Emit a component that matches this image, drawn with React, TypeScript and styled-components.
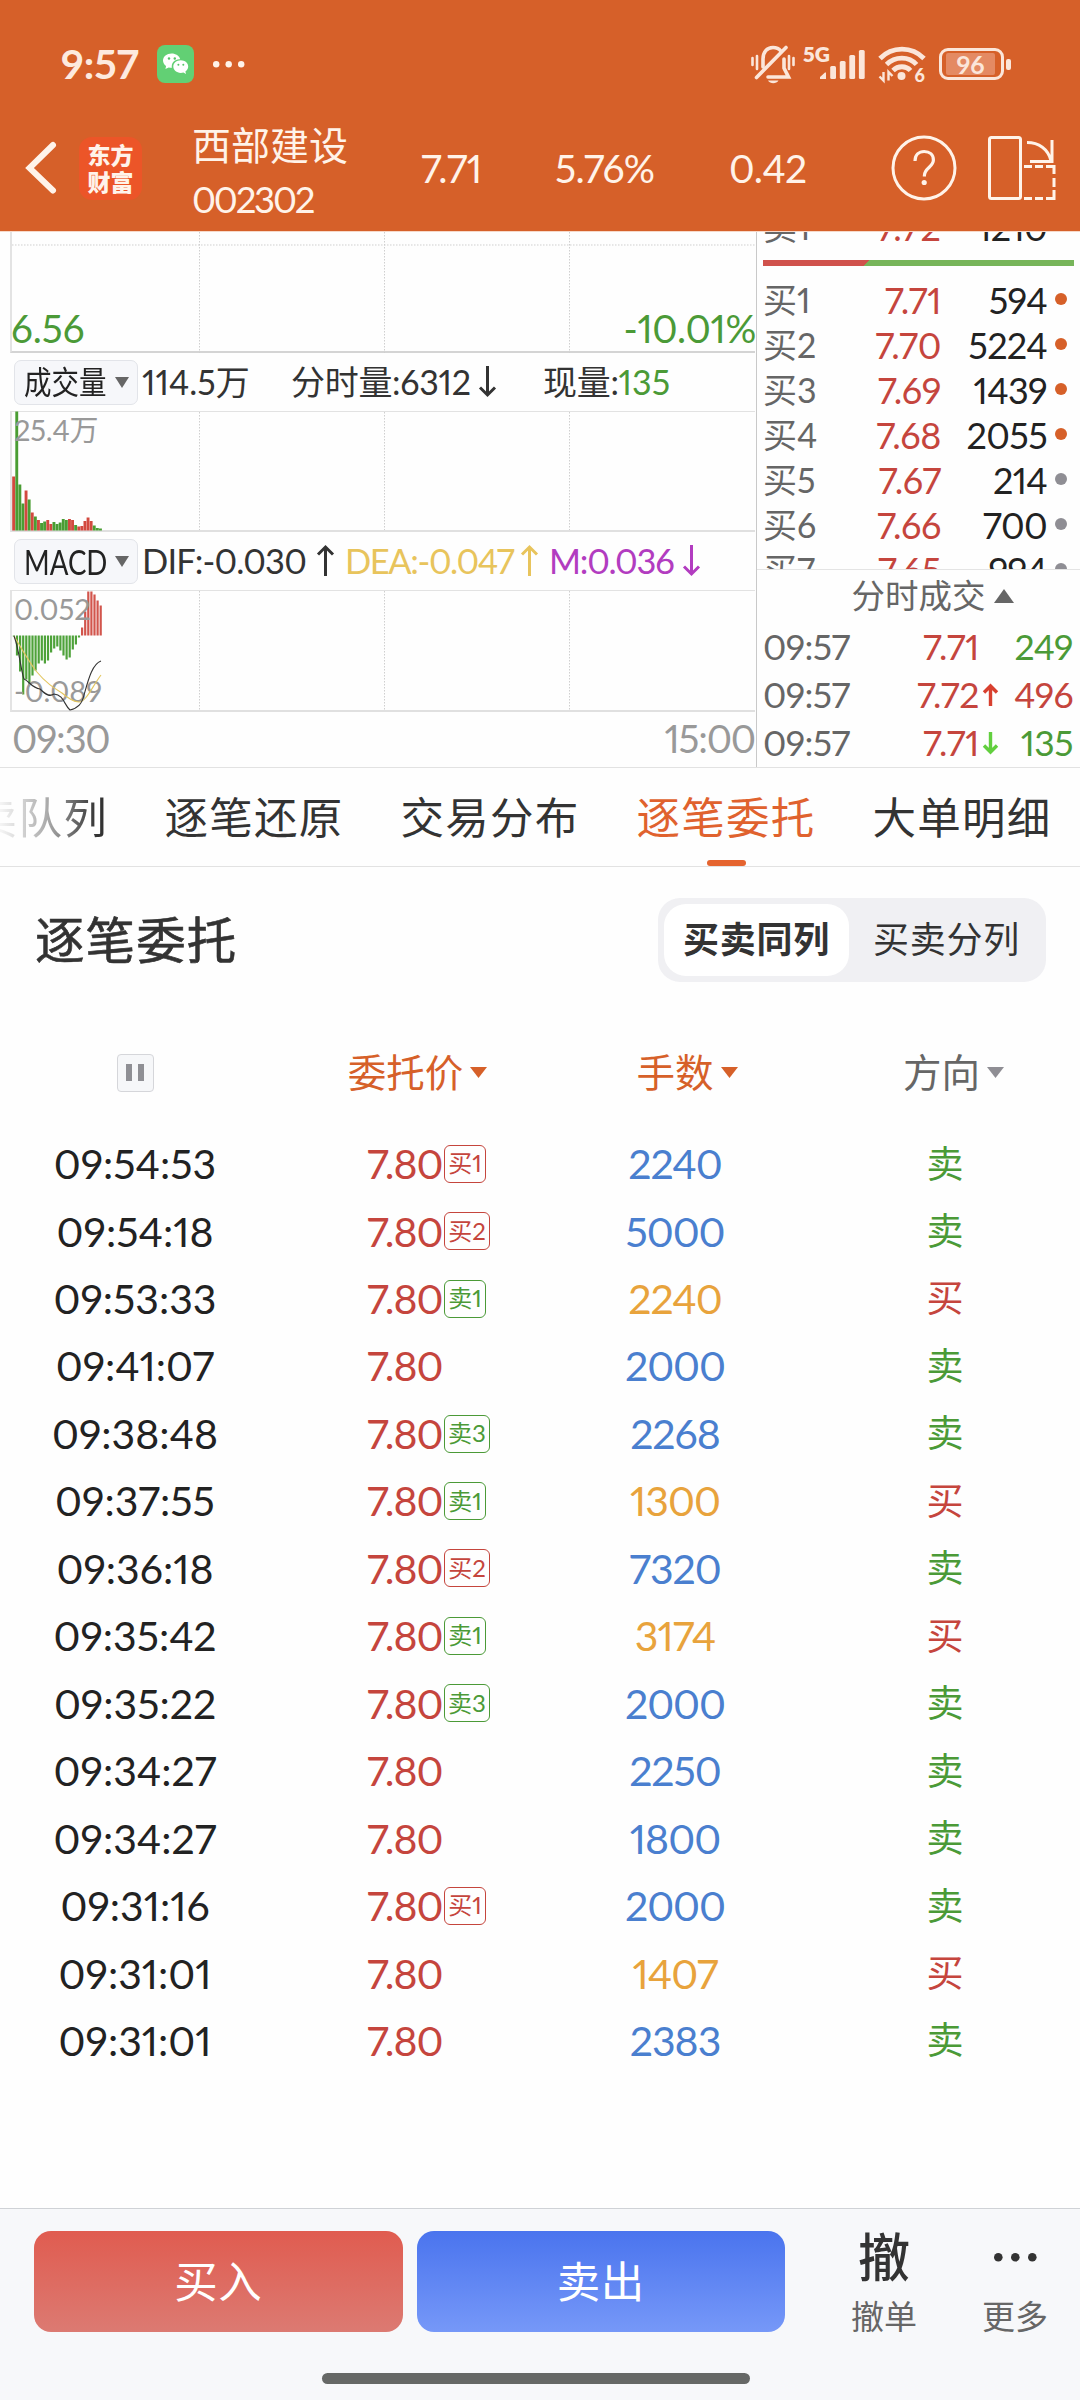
import React from "react";
import styled, { createGlobalStyle } from "styled-components";

const RED = "#c5453d";
const GREEN = "#4b9a37";
const ORANGE = "#d66029";
const BLUE = "#4a7fcf";
const AMBER = "#e8a33c";
const CREAM = "#fff3e9";

const Global = createGlobalStyle`
  * { box-sizing: border-box; }
  body {
    margin: 0; background: #fff; color: #333;
    font-family: Lato, "Noto Sans CJK SC", sans-serif;
    font-variant-numeric: proportional-nums; font-kerning: normal;
  }
  svg { display: block; flex: none; overflow: visible; }
`;

const Screen = styled.div`
  width: 1080px; height: 2400px; overflow: hidden;
  display: flex; flex-direction: column; background: #fefefe;
`;

const Text = styled.span<{ $s: number; $c?: string; $ls?: number; $w?: number; $sx?: number }>`
  display: inline-block; white-space: pre; line-height: 1.2;
  font-size: ${p => p.$s}px; color: ${p => p.$c || "inherit"};
  letter-spacing: ${p => p.$ls || 0}px; font-weight: ${p => p.$w || 400};
  ${p => p.$sx ? `transform: scaleX(${p.$sx}); transform-origin: left;` : ""}
`;

/* top area */
const Top = styled.header`height: 231px; background: ${ORANGE}; color: ${CREAM}; flex: none;`;
const StatusBar = styled.div`
  height: 128px; padding: 0 69px 0 61px; display: flex; align-items: center; justify-content: space-between;
`;
const StatusSide = styled.div<{ $gap: number }>`display: flex; align-items: center; gap: ${p => p.$gap}px;`;
const NavBar = styled.div`
  height: 103px; padding: 0 24px 23px 25px; display: flex; align-items: center;
`;
const Logo = styled.div`
  width: 63px; height: 63px; margin-left: 23px; border-radius: 13px; background: #ec5528; color: #fff3ea;
  display: grid; place-content: center; text-align: center;
  font: 900 23px/27px "Noto Sans CJK SC", sans-serif;
`;
const Stock = styled.div`margin: 8px 0 0 50px; width: 229px; display: flex; flex-direction: column; gap: 9px;`;
const Quote = styled.div<{ $w: number }>`width: ${p => p.$w}px; line-height: 0;`;

/* market area */
const Market = styled.section`height: 537px; display: flex; flex: none; border-bottom: 1px solid #e2e2e2; border-top: 1px solid #f7d9c9;`;
const ChartColumn = styled.div`width: 757px; border-right: 1px solid #c9c9c9; flex: none;`;
const Plot = styled.div<{ $h: number; $top?: boolean; $dark?: boolean }>`
  position: relative; height: ${p => p.$h}px; margin: 0 1px 0 10px; border-left: 2px solid #e3e3e3;
  border-bottom: 2px solid ${p => p.$dark ? "#d4d4d4" : "#e0e0e0"};
  border-top: ${p => p.$top ? "1px solid #e2e2e2" : "0"};
`;
const PlotSvg = styled.svg`display: block; width: 744px; height: 100%;`;
const Over = styled.div<{ $x?: number; $r?: number; $y: number }>`
  position: absolute; top: ${p => p.$y}px; line-height: 0;
  ${p => p.$r !== undefined ? `right: ${p.$r}px` : `left: ${p.$x}px`};
`;
const Indicator = styled.div`
  height: 58px; display: flex; align-items: center; padding-left: 14px; color: #333;
`;
const Picker = styled.div`
  width: 124px; height: 45px; border-radius: 7px; background: #f6f7fa; border: 1px solid #e2e4e9; color: #222;
  display: flex; align-items: center; justify-content: space-between; padding: 0 8px 0 9px; margin-right: 4px; flex: none;
`;
const PickerName = styled.div`width: 84px; flex: none; line-height: 0;`;
const Slot = styled.div<{ $w: number; $gap?: number }>`
  width: ${p => p.$w}px; flex: none; display: flex; align-items: center; gap: ${p => p.$gap || 0}px;
  line-height: 0; white-space: nowrap;
`;
const Axis = styled.div`height: 53px; display: flex; justify-content: space-between; align-items: center; padding: 0 1px 0 12px;`;

const Side = styled.div`flex: 1; min-width: 0; display: flex; flex-direction: column;`;
const Book = styled.div`height: 338px; overflow: hidden; border-bottom: 1px solid #e4e4e4;`;
const BookRow = styled.div`
  height: 45px; display: grid; grid-template-columns: 86px 92px 106px 24px; align-items: center; padding-left: 6px;
  color: #222; line-height: 0;
`;
const FirstRow = styled(BookRow)`margin-top: -27px;`;
const Right = styled.div`display: flex; justify-content: flex-end; line-height: 0;`;
const Dot = styled.i<{ $c: string }>`width: 12px; height: 12px; border-radius: 50%; background: ${p => p.$c}; margin: -3px 0 0 8px;`;
const Ratio = styled.div`
  height: 6px; margin: 10px 6px 12px 6px;
  background: linear-gradient(135deg, #d0524c 0 75px, #77b55a 75px);
`;
const TradesHead = styled.div`height: 53px; display: flex; align-items: center; justify-content: center; gap: 8px; padding: 0 0 2px 28px;`;
const TradeRow = styled.div`
  height: 48px; display: grid; grid-template-columns: 132px 84px 19px 75px; padding-left: 6px; align-items: center; line-height: 0;
`;

/* tabs */
const Tabs = styled.nav`height: 99px; border-bottom: 1px solid #e2e2e2; display: flex; padding-left: 0; overflow: hidden; flex: none;`;
const Tab = styled.div<{ $on?: boolean }>`
  width: 236px; flex: none; display: flex; flex-direction: column; align-items: center; justify-content: flex-end;
  color: ${p => p.$on ? "#e0622e" : "#333"};
`;
const CutTab = styled(Tab)`
  width: 136px; align-items: flex-end; padding-right: 28px;
`;
const Faded = styled(Text)`
  background: linear-gradient(90deg, #f4f4f4 72px, #ababab 118px, #333 168px); background-clip: text; -webkit-background-clip: text;
  color: transparent;
`;
const Underline = styled.i<{ $on?: boolean }>`
  width: 39px; height: 6px; border-radius: 3px; margin-top: 17px; background: ${p => p.$on ? "#e5642f" : "transparent"};
`;

/* order list */
const TitleRow = styled.div`height: 146px; padding: 0 34px 0 35px; display: flex; align-items: center; justify-content: space-between; flex: none;`;
const Title = styled(Text)`-webkit-text-stroke: 0.6px #333; padding-top: 1px;`;
const Toggle = styled.div`width: 388px; height: 84px; padding: 6px; border-radius: 22px; background: #f0f0f3; display: flex;`;
const Option = styled.div<{ $on?: boolean }>`
  width: ${p => p.$on ? 185 : 195}px; flex: none; border-radius: 22px; background: ${p => p.$on ? "#fff" : "transparent"};
  display: flex; align-items: center; justify-content: center; color: #333;
`;
const Row = styled.div`
  height: 67.46px; flex: none; display: grid; grid-template-columns: 270px 270px 270px 270px; align-items: center; line-height: 0;
`;
const HeadRow = styled(Row)`height: 117px; padding-top: 2px;`;
const Cell = styled.div<{ $gap?: number; $pl?: number }>`
  display: flex; align-items: center; justify-content: center; gap: ${p => p.$gap || 0}px; padding-left: ${p => p.$pl || 0}px;
`;
const PriceCell = styled.div`display: flex; align-items: center; padding-left: 97px;`;
const PriceBox = styled.div`width: 77px; line-height: 0;`;
const Badge = styled.div<{ $c: string; $wide: boolean }>`
  height: 38px; width: ${p => p.$wide ? 46 : 42}px; border: 1px solid ${p => p.$c}; border-radius: 6px; color: ${p => p.$c};
  display: flex; align-items: center; justify-content: center;
`;
const Pause = styled.div`
  width: 37px; height: 38px; border: 1px solid #d5d6da; border-radius: 4px; background: #f6f7f9;
  display: flex; align-items: center; justify-content: center; gap: 6px;
`;
const PauseBar = styled.i`width: 6px; height: 17px; background: #8f8f94;`;
const Spacer = styled.div`flex: 1;`;

/* footer */
const Footer = styled.footer`height: 192px; border-top: 1px solid #cfd2d6; background: #f7f8fa; flex: none;`;
const Actions = styled.div`height: 124px; display: flex; padding: 22px 0 0 34px;`;
const Action = styled.div<{ $bg: string }>`
  width: 368.5px; height: 101px; border-radius: 17px; background: ${p => p.$bg}; color: #fff; margin-right: 14px;
  display: flex; align-items: center; justify-content: center; padding-bottom: 1px;
`;
const Tool = styled.div<{ $w: number }>`
  width: ${p => p.$w}px; height: 106px; display: flex; flex-direction: column; align-items: center; justify-content: space-between; line-height: 0;
`;
const ToolIcon = styled.div`height: 52px; display: flex; align-items: center;`;
const HomeBar = styled.div`width: 428px; height: 11px; margin: 40px auto 0 322px; border-radius: 6px; background: #666866;`;

const Tri = ({ w, h, c, up }: { w: number; h: number; c: string; up?: boolean }) => (
  <svg width={w} height={h} viewBox="0 0 10 10" preserveAspectRatio="none">
    <path d={up ? "M0 10 5 0l5 10z" : "M0 0h10L5 10z"} fill={c} />
  </svg>
);

const Arrow = ({ w, h, c, up, sw = 3 }: { w: number; h: number; c: string; up?: boolean; sw?: number }) => (
  <svg width={w} height={h} viewBox={`0 0 ${w} ${h}`} fill="none" stroke={c} strokeWidth={sw}>
    <path
      transform={up ? `matrix(1 0 0 -1 0 ${h})` : undefined}
      d={`M${w / 2} 0V${h - 2}M1 ${h - w / 2 - 1}L${w / 2} ${h - 2}L${w - 1} ${h - w / 2 - 1}`}
    />
  </svg>
);

const Grid = ({ h, line }: { h: number; line?: number }) => (
  <g stroke="#cfcfcf" strokeWidth="1" strokeDasharray="1.5 1.5">
    {[187.5, 372.5, 557.5].map(x => <path key={x} d={`M${x} 0V${h}`} />)}
    {line !== undefined && <path d={`M0 ${line}H744`} />}
  </g>
);

const volumes: [string, number][] = [
  ["r", 54], ["g", 119], ["g", 46], ["g", 27], ["r", 40], ["g", 31], ["r", 18], ["g", 14], ["r", 10.5], ["g", 7.5],
  ["g", 9], ["r", 10.5], ["r", 6.5], ["g", 8.5], ["g", 6.5], ["g", 8], ["g", 11.5], ["g", 10.5], ["r", 11.5], ["r", 10.5],
  ["g", 5.5], ["r", 4], ["r", 4.5], ["r", 9.5], ["r", 13], ["r", 9.5], ["g", 5], ["g", 2.5], ["g", 2],
];
const macd = [1, 20, 36, 59, 44, 49, 40, 35, 28, 25, 28, 25, 17, 13, 11, 15, 20, 24, 22, 14, 9, 2, -8, -24, -44, -44, -41, -35, -30];

const bids: [string, string, string, boolean][] = [
  ["1", "7.71", "594", true], ["2", "7.70", "5224", true], ["3", "7.69", "1439", true], ["4", "7.68", "2055", true],
  ["5", "7.67", "214", false], ["6", "7.66", "700", false], ["7", "7.65", "994", false],
];
const orders: [string, string, string, string][] = [
  ["09:54:53", "买1", "2240", "卖"], ["09:54:18", "买2", "5000", "卖"], ["09:53:33", "卖1", "2240", "买"],
  ["09:41:07", "", "2000", "卖"], ["09:38:48", "卖3", "2268", "卖"], ["09:37:55", "卖1", "1300", "买"],
  ["09:36:18", "买2", "7320", "卖"], ["09:35:42", "卖1", "3174", "买"], ["09:35:22", "卖3", "2000", "卖"],
  ["09:34:27", "", "2250", "卖"], ["09:34:27", "", "1800", "卖"], ["09:31:16", "买1", "2000", "卖"],
  ["09:31:01", "", "1407", "买"], ["09:31:01", "", "2383", "卖"],
];

const WeChat = () => (
  <svg width="37" height="38" viewBox="0 0 37 38">
    <rect width="37" height="38" rx="8" fill="#62d074" />
    <g fill="#fff">
      <path d="M14.6 8.5C9.8 8.5 6 11.6 6 15.6c0 2.200 1.200 4.200 3.100 5.500L8.400 24l3.300-1.600c1 .3 2 .4 3.200.4-1-5 3-9 8.300-8.600C22.300 10.800 18.800 8.500 14.600 8.500z" />
      <path d="M23.800 15.300c-4.200 0-7.500 2.800-7.500 6.300s3.300 6.300 7.500 6.300c.9 0 1.800-.1 2.600-.4l2.600 1.400-.6-2.400c1.700-1.200 2.800-2.900 2.800-4.900 0-3.500-3.300-6.300-7.400-6.300z" />
    </g>
    <g fill="#55c468"><circle cx="12" cy="13.500" r="1.200" /><circle cx="17.800" cy="13.500" r="1.200" /><circle cx="21.400" cy="19.800" r="1" /><circle cx="26.300" cy="19.800" r="1" /></g>
  </svg>
);
const Dots = ({ gap, r, c }: { gap: number; r: number; c: string }) => (
  <svg width={gap * 2 + r * 2} height={r * 2}>
    {[0, 1, 2].map(i => <circle key={i} cx={r + gap * i} cy={r} r={r} fill={c} />)}
  </svg>
);
const Bell = () => (
  <svg width="44" height="39" viewBox="0 0 44 39" fill="none" stroke="#fbe6da" strokeWidth="3.600" strokeLinecap="round">
    <path d="M1.500 13v7M6 11v13M38 11v13M42.500 13v7" strokeWidth="2.600" />
    <path d="M12 22V14C12 7 16 2.500 22 2.500c3 0 6 1.200 7.800 3.500M33 14v9l4.500 9H17" />
    <path d="M35 2.500 5.500 32.500" strokeWidth="3.600" />
    <path d="M17 35.500h10.500c-2 3.500-8.500 3.500-10.500 0z" fill="#fbe6da" stroke="none" />
  </svg>
);
const FiveG = styled.span`
  width: 17px; height: 36px; overflow: visible; white-space: nowrap;
  font-size: 21px; line-height: 15px; font-weight: 800; color: #fbe6da;
`;
const Signal = () => (
  <svg width="45" height="36" viewBox="17 0 45 36">
    <g fill="#fbe6da">
      <path d="M17 33v-2l5-4.500h1V33z" />
      <rect x="27.200" y="20" width="5.800" height="13" rx="1.500" /><rect x="36.800" y="15" width="5.800" height="18" rx="1.500" />
      <rect x="46.300" y="9" width="5.800" height="24" rx="1.500" /><rect x="55.900" y="4" width="5.800" height="29" rx="1.500" />
    </g>
  </svg>
);
const Wifi = () => (
  <svg width="48" height="36" viewBox="0 0 48 36" fill="none" stroke="#fbe6da" strokeWidth="4.800">
    <path d="M2 12.500C14 0 34 0 46 12.500M8.500 18.500c8.500-8.500 22.500-8.500 30 0M15 24.500c5-5 13-5 17.500 0" />
    <circle cx="23.500" cy="30" r="4" fill="#fbe6da" stroke="none" />
    <path d="M5.500 26v8.500L1.500 30.500M10.500 34.500V26l4 4" strokeWidth="2.400" />
    <text x="36.500" y="35.500" fontWeight="900" fontSize="18" fill="#fbe6da" stroke="none">6</text>
  </svg>
);
const BatteryBody = styled.span`
  width: 65px; height: 32px; border: 3px solid #fbe6da; border-radius: 9px; padding: 2px 6px 2px 4px; margin-left: 13px;
`;
const BatteryFill = styled.span`
  display: flex; height: 22px; align-items: center; justify-content: center; border-radius: 2px; background: #e48a63;
  font-size: 25px; line-height: 22px; font-weight: 700; color: #fbe6da;
`;
const BatteryNub = styled.span`width: 5px; height: 11px; border-radius: 2px; background: #fbe6da; margin-left: 2px;`;
const StatusGap = styled.span<{ $w: number }>`width: ${p => p.$w}px;`;

const Rotate = () => (
  <svg width="68" height="64" viewBox="0 0 68 64" fill="none" stroke={CREAM} strokeWidth="3">
    <rect x="1.500" y="1.500" width="31" height="61" rx="2" />
    <path d="M36 30.500h8M47 30.500h8M58 30.500h8V38M66 42v9M66 54v8.500h-8M55 62.500h-8M44 62.500h-8" />
    <path d="M39 6.500c12 0 21 6.500 24 18M64 4v21.500H42" />
  </svg>
);

export default function App() {
  return (
    <Screen>
      <Global />
      <Top>
        <StatusBar>
          <StatusSide $gap={18.5}>
            <Text $s={41} $w={700} $c="#fdeadf">9:57</Text>
            <WeChat />
            <Dots gap={12.5} r={3.2} c={CREAM} />
          </StatusSide>
          <StatusSide $gap={0}>
            <Bell /><StatusGap $w={8} /><FiveG>5G</FiveG><Signal /><StatusGap $w={13} /><Wifi />
            <BatteryBody><BatteryFill>96</BatteryFill></BatteryBody><BatteryNub />
          </StatusSide>
        </StatusBar>
        <NavBar>
          <svg width="31" height="54" viewBox="0 0 31 54" fill="none" stroke={CREAM} strokeWidth="6" strokeLinecap="round">
            <path d="M28 4 4.500 27l23.500 22.500" />
          </svg>
          <Logo><span>东方</span><span>财富</span></Logo>
          <Stock>
            <Text $s={39}>西部建设</Text>
            <Text $s={36.5} $ls={-2.2}>002302</Text>
          </Stock>
          <Quote $w={134}><Text $s={39} $ls={-0.5}>7.71</Text></Quote>
          <Quote $w={174}><Text $s={39} $ls={-0.6}>5.76%</Text></Quote>
          <Quote $w={162}><Text $s={39} $ls={-0.5}>0.42</Text></Quote>
          <svg width="66" height="66" viewBox="0 0 66 66">
            <circle cx="33" cy="33" r="31" fill="none" stroke={CREAM} strokeWidth="3" />
            <path d="M24 26c0-6 4-9.500 9.200-9.500 5.300 0 9.200 3.300 9.200 8.500 0 7-9 8-9 15.500v1" fill="none" stroke={CREAM} strokeWidth="3.200" />
            <circle cx="33.200" cy="47.500" r="2.600" fill={CREAM} />
          </svg>
          <Spacer />
          <Rotate />
        </NavBar>
      </Top>

      <Market>
        <ChartColumn>
          <Plot $h={121} $dark>
            <PlotSvg><Grid h={121} line={13} /></PlotSvg>
            <Over $x={-1} $y={73}><Text $s={38.5} $c={GREEN}>6.56</Text></Over>
            <Over $r={-1} $y={73}><Text $s={38.5} $c={GREEN} $ls={-0.3}>-10.01%</Text></Over>
          </Plot>
          <Indicator>
            <Picker><PickerName><Text $s={32} $sx={0.86}>成交量</Text></PickerName><Tri w={14} h={11} c="#666" /></Picker>
            <Slot $w={149}><Text $s={34}>114.5万</Text></Slot>
            <Slot $w={252} $gap={8}><Text $s={34} $ls={-0.3}>分时量:6312</Text><Arrow w={17} h={31} c="#333" /></Slot>
            <Slot $w={140}><Text $s={34} $ls={-0.3}>现量:</Text><Text $s={34} $c={GREEN}>135</Text></Slot>
          </Indicator>
          <Plot $h={121} $top>
            <PlotSvg>
              <Grid h={118} />
              {volumes.map(([k, v], i) => (
                <rect key={i} x={0.2 + i * 3.1} y={118.5 - v} width="2.900" height={v} fill={k === "r" ? "#d2493f" : "#4a9d33"} />
              ))}
            </PlotSvg>
            <Over $x={2} $y={1}><Text $s={29} $c="#999" $ls={-0.2}>25.4万</Text></Over>
          </Plot>
          <Indicator>
            <Picker><PickerName><Text $s={35} $sx={0.79}>MACD</Text></PickerName><Tri w={14} h={11} c="#666" /></Picker>
            <Slot $w={203} $gap={11}><Text $s={34.5} $ls={-0.8}>DIF:-0.030</Text><Arrow w={17} h={31} c="#333" up /></Slot>
            <Slot $w={204} $gap={8}><Text $s={34.5} $c="#e8c45c" $ls={-1.4}>DEA:-0.047</Text><Arrow w={17} h={31} c="#e8c45c" up /></Slot>
            <Slot $w={190} $gap={9}><Text $s={34.5} $c="#b23cc0" $ls={-1.2}>M:0.036</Text><Arrow w={17} h={31} c="#b23cc0" /></Slot>
          </Indicator>
          <Plot $h={122} $top>
            <PlotSvg>
              <Grid h={120} />
              {macd.map((v, i) => (
                <rect key={i} x={0.8 + i * 3.1} y={v > 0 ? 44.5 : 44.5 + v} width="2.200" height={Math.abs(v)} fill={v > 0 ? "#4ea23a" : "#d2554c"} />
              ))}
            </PlotSvg>
            <Over $x={2} $y={1}><Text $s={29} $c="#999">0.052</Text></Over>
            <Over $x={2} $y={83}><Text $s={29} $c="#999">-0.089</Text></Over>
            <Over $x={0} $y={0}>
              <svg width="100" height="120" fill="none" strokeWidth="1.100">
                <path d="M2 45C8 55 14 66 24 80C34 92 42 97 50 102C58 109 62 111 67 111C74 111 80 96 89 84" stroke="#e3c65f" />
                <path d="M2 45C7 58 9 80 12 88C17 90 20 97 28 98C34 104 38 106 42 103C52 104 52 114 58 119C66 117 70 113 72 104C76 90 80 73 89 70" stroke="#333" />
              </svg>
            </Over>
          </Plot>
          <Axis><Text $s={38.5} $c="#999" $ls={-1.2}>09:30</Text><Text $s={38.5} $c="#999" $ls={-1.2}>15:00</Text></Axis>
        </ChartColumn>

        <Side>
          <Book>
            <FirstRow>
              <Text $s={34} $c="#666">卖1</Text><Right><Text $s={36} $c={RED}>7.72</Text></Right>
              <Right><Text $s={36} $ls={-0.7}>1210</Text></Right><Dot $c={ORANGE} />
            </FirstRow>
            <Ratio />
            {bids.map(([n, price, vol, hot]) => (
              <BookRow key={n}>
                <Text $s={34} $c="#666">买{n}</Text><Right><Text $s={36} $c={RED} $ls={-0.4}>{price}</Text></Right>
                <Right><Text $s={36} $ls={-0.7}>{vol}</Text></Right><Dot $c={hot ? ORANGE : "#8f8e94"} />
              </BookRow>
            ))}
          </Book>
          <TradesHead><Text $s={33.5} $c="#666">分时成交</Text><Tri w={20} h={14} c="#666" up /></TradesHead>
          {[["7.71", "249", GREEN, ""], ["7.72", "496", RED, "u"], ["7.71", "135", GREEN, "d"]].map(([p, v, c, a], i) => (
            <TradeRow key={i}>
              <Text $s={35.5} $c="#666" $ls={-0.6}>09:57</Text>
              <Right><Text $s={35.5} $c={RED} $ls={-0.3}>{p}</Text></Right>
              <Right>{a && <Arrow w={15} h={22} sw={3.4} c={a === "u" ? "#d8402f" : "#62cf3e"} up={a === "u"} />}</Right>
              <Right><Text $s={35.5} $c={c} $ls={-0.5}>{v}</Text></Right>
            </TradeRow>
          ))}
        </Side>
      </Market>

      <Tabs>
        <CutTab><Faded $s={43.5} $ls={1.3}>买卖队列</Faded><Underline /></CutTab>
        {["逐笔还原", "交易分布", "逐笔委托", "大单明细"].map((t, i) => (
          <Tab key={t} $on={i === 2}><Text $s={43.5} $ls={1.3}>{t}</Text><Underline $on={i === 2} /></Tab>
        ))}
      </Tabs>

      <TitleRow>
        <Title $s={49.5} $ls={1.1}>逐笔委托</Title>
        <Toggle>
          <Option $on><Text $s={36} $ls={0.7} $w={700}>买卖同列</Text></Option>
          <Option><Text $s={36} $ls={0.7}>买卖分列</Text></Option>
        </Toggle>
      </TitleRow>

      <HeadRow>
        <Cell><Pause><PauseBar /><PauseBar /></Pause></Cell>
        <Cell $gap={7} $pl={25}><Text $s={38.5} $c={ORANGE}>委托价</Text><Tri w={17} h={11} c={ORANGE} /></Cell>
        <Cell $gap={7} $pl={24}><Text $s={38.5} $c={ORANGE}>手数</Text><Tri w={17} h={11} c={ORANGE} /></Cell>
        <Cell $gap={7} $pl={17}><Text $s={38.5} $c="#666">方向</Text><Tri w={17} h={11} c="#8f8e94" /></Cell>
      </HeadRow>
      {orders.map(([t, b, n, d], i) => (
        <Row key={i}>
          <Cell><Text $s={41} $c="#222">{t}</Text></Cell>
          <PriceCell>
            <PriceBox><Text $s={41} $c={RED} $ls={-1}>7.80</Text></PriceBox>
            {b && <Badge $c={b[0] === "买" ? RED : GREEN} $wide={b[1] !== "1"}><Text $s={24}>{b}</Text></Badge>}
          </PriceCell>
          <Cell><Text $s={41} $ls={-1} $c={d === "买" ? AMBER : BLUE}>{n}</Text></Cell>
          <Cell><Text $s={37} $c={d === "买" ? RED : GREEN}>{d}</Text></Cell>
        </Row>
      ))}
      <Spacer />

      <Footer>
        <Actions>
          <Action $bg="linear-gradient(#e05c50, #dc7a72)"><Text $s={43.5} $ls={0.5}>买入</Text></Action>
          <Action $bg="linear-gradient(#4a74ee, #7698f8)"><Text $s={43.5} $ls={0.5}>卖出</Text></Action>
          <Tool $w={170}>
            <ToolIcon><Text $s={52} $w={500}>撤</Text></ToolIcon>
            <Text $s={33} $c="#666">撤单</Text>
          </Tool>
          <Tool $w={92}>
            <ToolIcon><Dots gap={17} r={4.3} c="#333" /></ToolIcon>
            <Text $s={33} $c="#666">更多</Text>
          </Tool>
        </Actions>
        <HomeBar />
      </Footer>
    </Screen>
  );
}
